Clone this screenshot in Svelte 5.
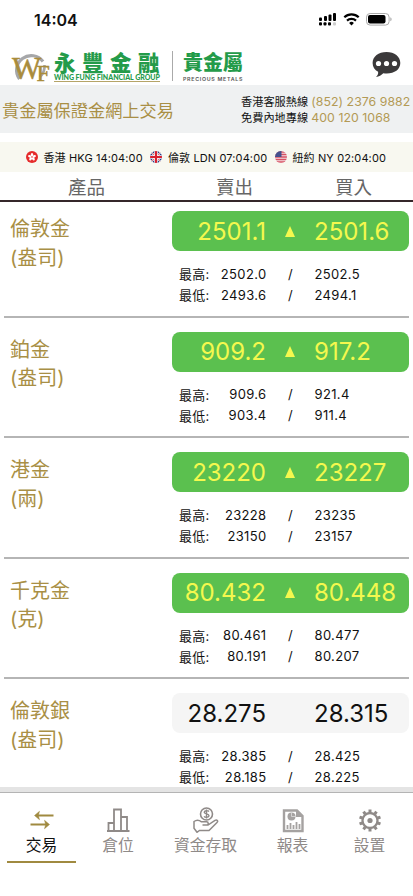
<script>
	const clocks = [
		{ flag: 'hk', text: '香港 HKG 14:04:00' },
		{ flag: 'uk', text: '倫敦 LDN 07:04:00' },
		{ flag: 'us', text: '紐約 NY 02:04:00' },
	];

	const products = [
		{ name: '倫敦金', unit: '(盎司)', sell: '2501.1', buy: '2501.6', up: true, high: ['2502.0', '2502.5'], low: ['2493.6', '2494.1'] },
		{ name: '鉑金', unit: '(盎司)', sell: '909.2', buy: '917.2', up: true, high: ['909.6', '921.4'], low: ['903.4', '911.4'] },
		{ name: '港金', unit: '(兩)', sell: '23220', buy: '23227', up: true, high: ['23228', '23235'], low: ['23150', '23157'] },
		{ name: '千克金', unit: '(克)', sell: '80.432', buy: '80.448', up: true, high: ['80.461', '80.477'], low: ['80.191', '80.207'] },
		{ name: '倫敦銀', unit: '(盎司)', sell: '28.275', buy: '28.315', up: false, high: ['28.385', '28.425'], low: ['28.185', '28.225'] },
	];

	const tabs = [
		{ id: 'trade', label: '交易' },
		{ id: 'position', label: '倉位' },
		{ id: 'funds', label: '資金存取' },
		{ id: 'report', label: '報表' },
		{ id: 'settings', label: '設置' },
	];

	const teeth = [0, 36, 72, 108, 144, 180, 216, 252, 288, 324];

	let active = $state('trade');
</script>

<div class="app">
	<div class="status">
		<span class="time">14:04</span>
		<svg class="status-icons" width="76" height="16" viewBox="0 0 76 16">
			<rect x="1" y="5.5" width="3" height="3.5" rx="1" />
			<rect x="6" y="4" width="3" height="5" rx="1" />
			<rect x="10.5" y="2.5" width="3" height="6.5" rx="1" />
			<rect x="15" y="1" width="3" height="8" rx="1" />
			<rect x="1" y="10.3" width="3" height="3.2" rx="1" />
			<rect x="5.5" y="10.3" width="3" height="3.2" rx="1" />
			<rect x="10" y="10.3" width="3" height="3.2" rx="1" />
			<rect x="15" y="10.3" width="3" height="3.2" rx="1" fill="#ccc" />
			<path d="M26.3 5.3a10.4 10.4 0 0 1 14.4 0M29 8.6a6.6 6.6 0 0 1 9 0" fill="none" stroke="#000" stroke-width="2.2" />
			<path d="M33.5 13.5l-2.4-2.6a3.6 3.6 0 0 1 4.8 0z" />
			<rect x="48.5" y="1.5" width="22.6" height="11.6" rx="3.6" fill="none" stroke="#aaa" />
			<rect x="50" y="3" width="17.5" height="8.6" rx="2" />
			<path d="M72.3 5.2v4c1.8-.6 1.8-3.4 0-4z" fill="#aaa" />
		</svg>
	</div>

	<header>
		<svg class="mark" width="40" height="32" viewBox="0 0 40 32">
			<path d="M8.500 28A13 13 0 1 1 32 10.500" fill="none" stroke="#a6a7a9" stroke-width="3.200" />
			<path d="M33.500 14Q34 21 29 26" fill="none" stroke="#a6a7a9" stroke-width="2.600" />
			<text x="1" y="27.500" font-size="31">W<tspan x="25.500" y="30" font-size="24">F</tspan></text>
		</svg>
		<div class="brand">
			<div class="brand-zh">永豐金融</div>
			<div class="brand-en">WING FUNG FINANCIAL GROUP</div>
		</div>
		<div class="metals">
			<div class="metals-zh">貴金屬</div>
			<div class="metals-en">PRECIOUS METALS</div>
		</div>
		<svg class="chat" width="30" height="26" viewBox="0 0 30 26">
			<path d="M14.500 0C22.500 0 28.300 4.600 28.300 11S22.500 21.500 14.800 21.500q-1.800 0-3.500-.3C9.500 23 7 24.500 4 25c1.800-1.500 2.400-3.200 2.100-5.200C2.700 18 .6 15 .6 11 .6 4.600 6.500 0 14.500 0z" fill="#3b393a" />
			<circle cx="6.500" cy="11.500" r="2.600" fill="#fff" />
			<circle cx="14.500" cy="11.500" r="2.600" fill="#fff" />
			<circle cx="22.500" cy="11.500" r="2.600" fill="#fff" />
		</svg>
	</header>

	<div class="contact">
		<div class="title">貴金屬保證金網上交易</div>
		<div class="lines">
			<div>香港客服熱線 <span class="phone">(852) 2376 9882</span></div>
			<div>免費內地專線 <span class="phone">400 120 1068</span></div>
		</div>
	</div>

	<div class="clocks">
		{#each clocks as c}
			<svg width="12" height="12" viewBox="0 0 12 12">
				{#if c.flag === 'hk'}
					<circle cx="6" cy="6" r="6" fill="#e52b2b" />
					{#each [0, 72, 144, 216, 288] as a}
						<ellipse cx="6" cy="3.800" rx="1.250" ry="1.900" fill="#fff" transform="rotate({a} 6 6)" />
					{/each}
					<circle cx="6" cy="6" r=".7" fill="#e52b2b" />
				{:else if c.flag === 'uk'}
					<clipPath id="uk"><circle cx="6" cy="6" r="6" /></clipPath>
					<g clip-path="url(#uk)">
						<rect width="12" height="12" fill="#263a83" />
						<path d="M0 0l12 12M12 0L0 12" stroke="#fff" stroke-width="1.800" />
						<path d="M0 0l12 12M12 0L0 12" stroke="#d33" stroke-width=".7" />
						<path d="M6 0v12M0 6h12" stroke="#fff" stroke-width="3.600" />
						<path d="M6 0v12M0 6h12" stroke="#d8202f" stroke-width="2.200" />
					</g>
				{:else}
					<clipPath id="us"><circle cx="6" cy="6" r="6" /></clipPath>
					<g clip-path="url(#us)">
						<rect width="12" height="12" fill="#f3dfe3" />
						<path d="M0 1h12M0 3.500h12M0 6h12M0 8.500h12M0 11h12" stroke="#d75263" stroke-width="1.300" />
						<rect width="6.500" height="6" fill="#46518d" />
					</g>
				{/if}
			</svg>
			<span class="zone {c.flag}">{c.text}</span>
		{/each}
	</div>

	<div class="head">
		<span class="h-product">產品</span>
		<span class="h-sell">賣出</span>
		<span class="h-buy">買入</span>
	</div>

	<main>
		{#each products as p}
			<section class="row">
				<div class="name">{p.name}<br />{p.unit}</div>
				<div class="quote">
					<div class="price" class:up={p.up}>
						<span class="sell">{p.sell}</span>
						<span class="arrow">
							{#if p.up}
								<svg width="10" height="11" viewBox="0 0 10 11"><path d="M5 0l5 11H0z" fill="#f4f84e" /></svg>
							{/if}
						</span>
						<span class="buy">{p.buy}</span>
					</div>
					<div class="range">
						<span class="label">最高:</span><span class="from">{p.high[0]}</span><span class="slash">/</span><span>{p.high[1]}</span>
					</div>
					<div class="range">
						<span class="label">最低:</span><span class="from">{p.low[0]}</span><span class="slash">/</span><span>{p.low[1]}</span>
					</div>
				</div>
			</section>
		{/each}
	</main>

	<nav>
		{#each tabs as t}
			<button class="tab {t.id}" class:active={active === t.id} onclick={() => (active = t.id)}>
				<svg width="26" height="26" viewBox="0 0 26 26" fill="none" stroke="currentColor">
					{#if t.id === 'trade'}
						<path d="M24.500 8.500H8M1.500 17.500H18" stroke-width="1.800" />
						<path d="M5.500 8.500l5-4.200-1.200 4.200 1.200 4.200zM20.500 17.500l-5-4.200 1.200 4.200-1.200 4.200z" fill="currentColor" stroke-width=".5" />
					{:else if t.id === 'position'}
						<path d="M2 24h22.500M3.500 24v-8h5.500v8M9 24V2.500h7V24M16 24V10h6v14" stroke-width="1.800" />
					{:else if t.id === 'funds'}
						<circle cx="13.500" cy="7" r="6" stroke-width="1.600" />
						<path d="M16 4.500c-1-1.200-4.800-1.200-4.800.7 0 2 4.800 1.300 4.800 3.500 0 2-4 2-5 .6M13.500 2.500v9" stroke-width="1.400" />
						<path d="M1 14.500c3-2.300 5.500-1.300 7.500.3h5c2.300 0 2.300 3.200 0 3.200H9.500h5.500l7-4.700c2-1 3.500.7 2 2.200L16 23.500H6.500L4 25.300l-3-4z" stroke-width="1.500" />
					{:else if t.id === 'report'}
						<path d="M4 3.500h13l5.500 5.500v15H4z" stroke-width="2.400" />
						<path d="M16 3v7h7z" fill="currentColor" stroke="none" />
						<circle cx="11.500" cy="9.500" r="4" fill="currentColor" stroke="none" />
						<path d="M11.500 9.500V5.500M11.500 9.500h4" stroke="#ddd" stroke-width=".8" />
						<path d="M7.500 22v-4M10.500 22v-6M13.500 22v-4M16.500 22v-7M19.500 22v-5" stroke-width="1.800" />
					{:else}
						<circle cx="13" cy="13.500" r="7.500" stroke-width="2.300" />
						<circle cx="13" cy="13.500" r="2.600" fill="currentColor" stroke="none" />
						{#each teeth as a}
							<path d="M13 5.500V2.500" stroke-width="3" transform="rotate({a} 13 13.500)" />
						{/each}
					{/if}
				</svg>
				<span>{t.label}</span>
			</button>
		{/each}
	</nav>
</div>

<style>
	:global(body) {
		margin: 0;
		background: #fff;
	}

	.app {
		width: 413px;
		height: 896px;
		display: flex;
		flex-direction: column;
		overflow: hidden;
		background: #fff;
		font-family: Inter, 'Noto Sans CJK TC', sans-serif;
		color: #111;
		white-space: nowrap;
	}

	.status {
		height: 40px;
		flex: none;
		display: flex;
		justify-content: space-between;
		align-items: center;
		padding: 0 17px 0 34px;
		box-sizing: border-box;
	}

	.time {
		font-size: 16px;
		font-weight: 600;
	}

	.status-icons {
		margin-right: 2px;
	}

	header {
		height: 45px;
		flex: none;
		display: flex;
		align-items: flex-start;
		padding: 11px 12px 0 11px;
		box-sizing: border-box;
	}

	.mark {
		margin-right: 3px;
		overflow: visible;
	}

	.mark text {
		font-family: 'Liberation Serif', serif;
		fill: #a98c3c;
		stroke: #a98c3c;
		stroke-width: 0.500px;
	}

	.brand {
		width: 106px;
		color: #249b4a;
		font-weight: 700;
	}

	.brand-zh {
		font-size: 21.500px;
		line-height: 22px;
		letter-spacing: 6.500px;
		font-weight: 900;
		padding-top: 1px;
	}

	.brand-en {
		font-family: Lato, sans-serif;
		font-size: 7px;
		font-weight: 900;
		line-height: 6px;
		letter-spacing: -0.020px;
		padding-bottom: 1px;
		border-bottom: 1px solid #b5a468;
	}

	.metals {
		border-left: 1px solid #aaa;
		height: 30px;
		margin-left: 12px;
		padding-left: 10px;
	}

	.metals-zh {
		font-size: 20px;
		line-height: 22px;
		font-weight: 900;
		color: #249b4a;
		padding-top: 1px;
	}

	.metals-en {
		font-size: 5.300px;
		line-height: 11px;
		font-weight: 600;
		color: #555;
		letter-spacing: 0.700px;
	}

	.chat {
		margin: 1px -1px 0 auto;
	}

	.contact {
		height: 48px;
		flex: none;
		display: flex;
		justify-content: space-between;
		align-items: center;
		padding: 0 0 0 2px;
		background: #eff1f2;
	}

	.title {
		font-size: 17.200px;
		color: #a98f45;
	}

	.lines {
		width: 172px;
		font-size: 11.200px;
		line-height: 15px;
		padding-top: 2px;
	}

	.phone {
		font-size: 12.300px;
		color: #b39a55;
		letter-spacing: 0.050px;
	}

	.clocks {
		height: 30px;
		flex: none;
		display: flex;
		align-items: center;
		margin-top: 9px;
		padding-left: 25.500px;
		background: #f8f8f0;
		font-size: 11px;
		letter-spacing: 0.120px;
	}

	.zone {
		margin-left: 6px;
		width: 106.500px;
	}

	.head {
		height: 28px;
		flex: none;
		display: flex;
		align-items: center;
		border-bottom: 2px solid #35272a;
		font-size: 18.500px;
		color: #666;
	}

	.h-product {
		width: 148px;
		padding-left: 68px;
	}

	.h-sell {
		width: 119px;
	}

	main {
		flex: 1;
		overflow: hidden;
	}

	.row {
		height: 120.600px;
		box-sizing: border-box;
		margin: 0 4px;
		padding-top: 14px;
		border-bottom: 2px solid #b5b5b5;
		display: flex;
	}

	.row:first-child {
		height: 115.600px;
		padding-top: 9px;
	}

	.name {
		width: 168px;
		padding: 4px 0 0 6px;
		box-sizing: border-box;
		font-size: 20px;
		line-height: 28.500px;
		color: #a98f45;
	}

	.quote {
		width: 237px;
	}

	.price {
		height: 40px;
		display: flex;
		align-items: center;
		border-radius: 8px;
		background: #f5f5f5;
		margin-bottom: 12px;
		font-size: 24px;
	}

	.price.up {
		background: #5bc04f;
		color: #f4f84e;
	}

	.sell {
		width: 94px;
		text-align: right;
	}

	.arrow {
		width: 48px;
		display: flex;
		justify-content: center;
	}

	.range {
		display: flex;
		align-items: center;
		height: 21px;
		font-size: 13px;
		letter-spacing: 0.350px;
	}

	.label {
		width: 38px;
		padding-left: 7px;
		letter-spacing: 0.200px;
	}

	.from {
		width: 49.500px;
		text-align: right;
	}

	.slash {
		width: 48px;
		text-align: center;
	}

	nav {
		height: 103px;
		flex: none;
		display: flex;
		border-top: 1px solid #b4b4b4;
		box-shadow: 0 -5px 0 #e4e4e4;
		background: #fff;
		position: relative;
	}

	.tab {
		height: 70px;
		box-sizing: border-box;
		padding: 14px 0 0;
		border: 0;
		border-bottom: 2px solid transparent;
		background: none;
		font: inherit;
		font-size: 15.800px;
		color: #8f8a88;
		display: flex;
		flex-direction: column;
		align-items: center;
	}

	.tab span {
		line-height: 26px;
	}

	.trade {
		width: 69px;
		margin-left: 7px;
	}

	.position {
		width: 84px;
	}

	.funds {
		width: 91px;
	}

	.report {
		width: 83px;
	}

	.report svg {
		color: #a5a2a1;
	}

	.settings {
		width: 71px;
	}

	.active {
		border-bottom-color: #a08a40;
		color: #a08a40;
	}

	.active span {
		color: #111;
	}
</style>
